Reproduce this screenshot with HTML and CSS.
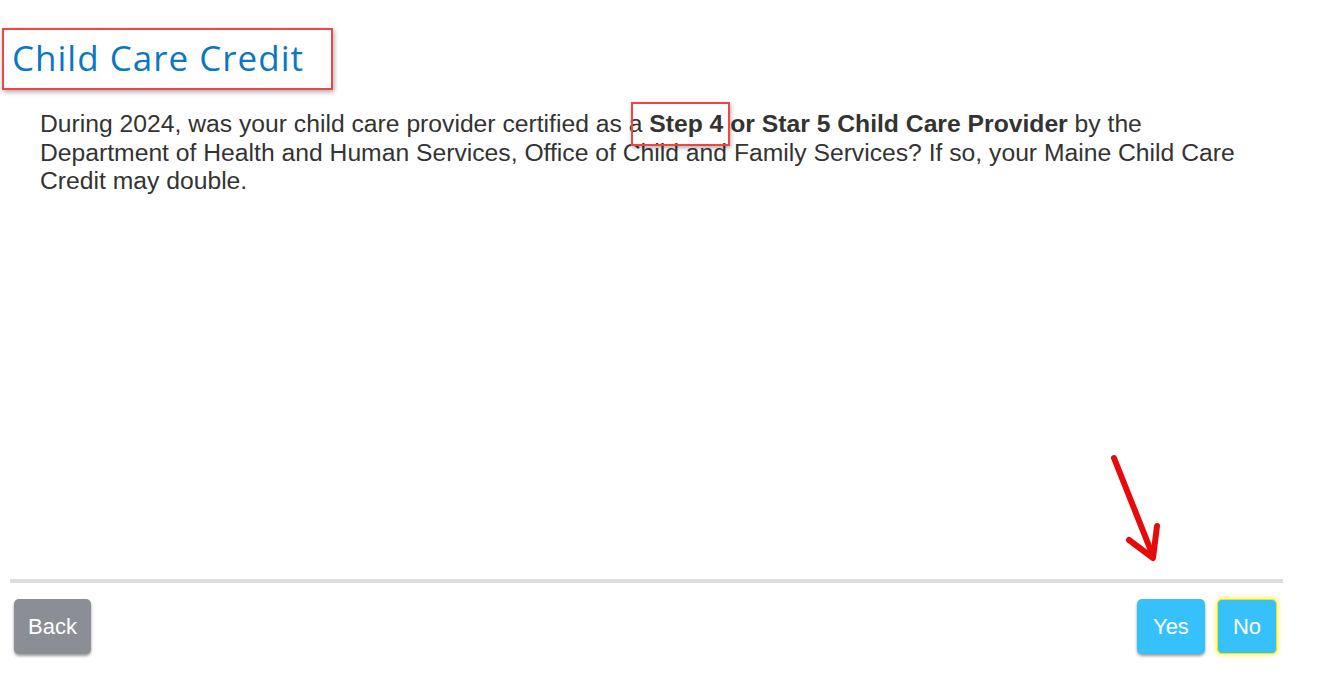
FILE: index.html
```html
<!DOCTYPE html>
<html lang="en">
<head>
    <meta charset="UTF-8">
    <meta name="viewport" content="width=device-width, initial-scale=1.0">
    <title>Child Care Credit</title>
    <link rel="stylesheet" href="styles.css">
</head>
<body>
    <div class="page">
        <div class="content">
            <div class="title-box">
                <h1 class="title">Child Care Credit</h1>
            </div>
            <p class="question">
                During 2024, was your child care provider certified as a <strong class="marked">Step 4</strong> <strong>or Star 5 Child Care Provider</strong> by the Department of Health and Human Services, Office of Child and Family Services? If so, your Maine Child Care Credit may double.
            </p>
        </div>
        <!-- annotation arrow -->
        <svg class="arrow" width="60" height="120" viewBox="0 0 60 120">
            <path d="M7 6 L46 104" stroke="#e60a0a" stroke-width="6" stroke-linecap="round" fill="none"/>
            <path d="M22 88 L46 106 L50 74" stroke="#e60a0a" stroke-width="6" stroke-linecap="round" stroke-linejoin="round" fill="none"/>
        </svg>
        <div class="footer">
            <button class="btn btn-back">Back</button>
            <div class="answers">
                <button class="btn btn-answer">Yes</button>
                <button class="btn btn-answer btn-focus">No</button>
            </div>
        </div>
    </div>
</body>
</html>
```

FILE: styles.css
```css
body {
    margin: 0;
    background-color: #fff;
    font-family: "Liberation Sans", Arial, sans-serif;
}
.page {
    position: relative;
    height: 692px;
    width: 1283px;
    padding-left: 10px;
    box-sizing: border-box;
    display: flex;
    flex-direction: column;
}
.content {
    flex: 1;
}
.title-box {
    display: inline-block;
    margin: 28px 0 0 -8px;
    padding: 6px 27px 8px 8px;
    border: 2px solid #ee4646;
    box-shadow: 1px 2px 5px rgba(0, 0, 0, 0.35);
}
.title {
    margin: 0;
    font-family: "Open Sans", Lato, sans-serif;
    font-weight: 400;
    font-size: 35px;
    letter-spacing: 1px;
    line-height: 44px;
    color: #0a77c0;
}
.question {
    margin: 20px 0 0 30px;
    padding-right: 30px;
    font-size: 24.7px;
    line-height: 28.5px;
    color: #333;
}
.question strong {
    font-weight: bold;
}
.marked {
    position: relative;
}
.marked::after {
    content: "";
    position: absolute;
    left: -18px;
    right: -7px;
    top: -8px;
    bottom: -9px;
    border: 2px solid #ee4646;
    box-shadow: 1px 2px 4px rgba(0, 0, 0, 0.3);
}
.arrow {
    position: absolute;
    left: 1107px;
    top: 452px;
}
.footer {
    border-top: 4px solid #ddd;
    padding: 16px 6px 0 4px;
    height: 113px;
    box-sizing: border-box;
    display: flex;
    justify-content: space-between;
    align-items: flex-start;
}
.answers {
    display: flex;
    gap: 12px;
}
.btn {
    height: 55px;
    border: 1px solid transparent;
    border-radius: 5px;
    color: white;
    font-family: "Liberation Sans", Arial, sans-serif;
    font-size: 22px;
    padding: 0 15px;
    cursor: pointer;
    box-shadow: 0 2px 3px rgba(0, 0, 0, 0.4);
}
.btn-back {
    padding: 0 13px;
    background-color: #8b8e95;
}
.btn-answer {
    background-color: #37c1fb;
}
.btn-focus {
    border-color: #f5e600;
    box-shadow: 0 0 5px 1px rgba(255, 230, 0, 0.6);
}
```
